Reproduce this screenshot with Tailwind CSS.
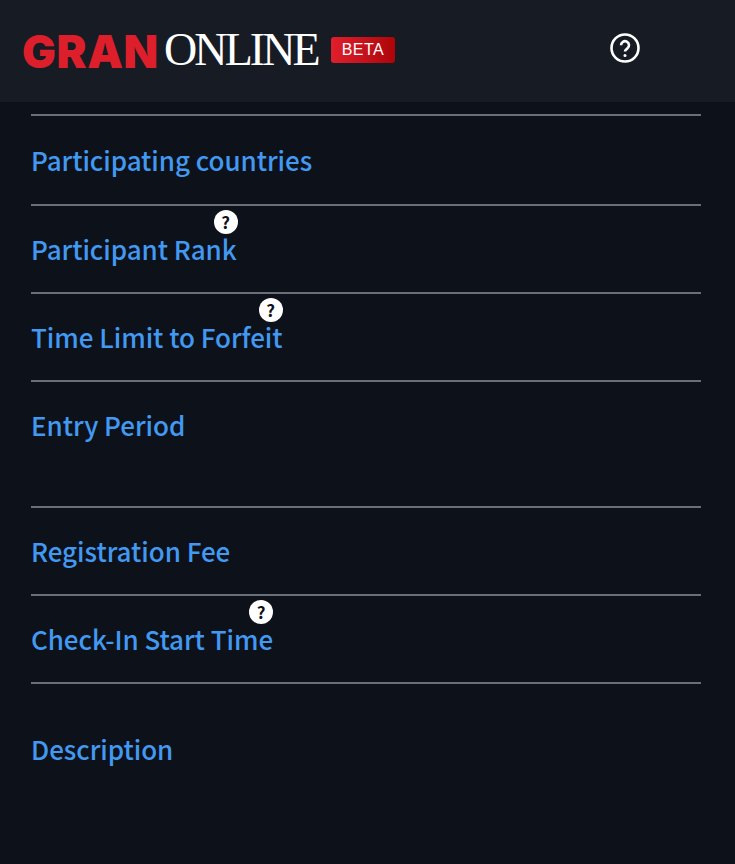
<!DOCTYPE html>
<html lang="en">
<head>
<meta charset="UTF-8">
<title>Gran Online</title>
<script src="https://cdn.jsdelivr.net/npm/@tailwindcss/browser@4"></script>
</head>
<body class="bg-[#0d1119] font-['Noto_Sans_CJK_JP','Noto_Sans',sans-serif] h-[864px] overflow-hidden">
  <!-- Header -->
  <header class="h-[102px] bg-[#171c24] flex items-center relative">
    <div class="ml-[22px] flex items-center">
      <span class="w-[137px] font-['Inter',sans-serif] font-black text-[#dc1f2a] text-[45px] leading-none tracking-[0.6px]">GRAN</span>
      <span class="ml-[5px] w-[154px] -mt-[2px] font-['Liberation_Serif',serif] text-white text-[46px] leading-none tracking-[-2.9px]">ONLINE</span>
      <span class="ml-[13px] w-[64px] h-[26px] -mt-[2px] rounded-[3px] bg-gradient-to-r from-[#e01f2b] to-[#ad0508] text-white text-[16px] flex items-center justify-center font-['Liberation_Sans',sans-serif] tracking-[0.5px]">BETA</span>
    </div>
    <svg class="absolute left-[610px] top-[33px] w-[30px] h-[30px]" viewBox="0 0 30 30" fill="none" stroke="white">
      <circle cx="15" cy="15" r="13.5" stroke-width="2.6"/>
      <path d="M11 12.2a4 4 0 1 1 6.4 3.2c-1.4 1-2.4 1.6-2.4 3.2" stroke-width="2.6" fill="none"/>
      <circle cx="15" cy="22.4" r="1.5" fill="white" stroke="none"/>
    </svg>
  </header>

  <!-- Rows -->
  <main class="mx-[31px] w-[670px] text-[#4299f2] text-[26px] leading-[36px] font-medium tracking-[-0.04px]">
    <div class="mt-[12px] h-[90px] border-t-2 border-[#6b7078] pt-[26px]">Participating countries</div>
    <div class="h-[88px] border-t-2 border-[#6b7078] pt-[25px]">
      <span class="relative inline-block">Participant Rank
        <span class="absolute -right-[1px] -top-[21px] w-6 h-6 rounded-full bg-white text-[#0d1119] text-[17px] leading-6 font-bold text-center">?</span>
      </span>
    </div>
    <div class="h-[88px] border-t-2 border-[#6b7078] pt-[25px]">
      <span class="relative inline-block">Time Limit to Forfeit
        <span class="absolute right-0 -top-[21px] w-6 h-6 rounded-full bg-white text-[#0d1119] text-[17px] leading-6 font-bold text-center">?</span>
      </span>
    </div>
    <div class="h-[126px] border-t-2 border-[#6b7078] pt-[25px]">Entry Period</div>
    <div class="h-[88px] border-t-2 border-[#6b7078] pt-[25px]">Registration Fee</div>
    <div class="h-[88px] border-t-2 border-[#6b7078] pt-[25px]">
      <span class="relative inline-block">Check-In Start Time
        <span class="absolute right-0 -top-[21px] w-6 h-6 rounded-full bg-white text-[#0d1119] text-[17px] leading-6 font-bold text-center">?</span>
      </span>
    </div>
    <div class="border-t-2 border-[#6b7078] pt-[47px]">Description</div>
  </main>
</body>
</html>
